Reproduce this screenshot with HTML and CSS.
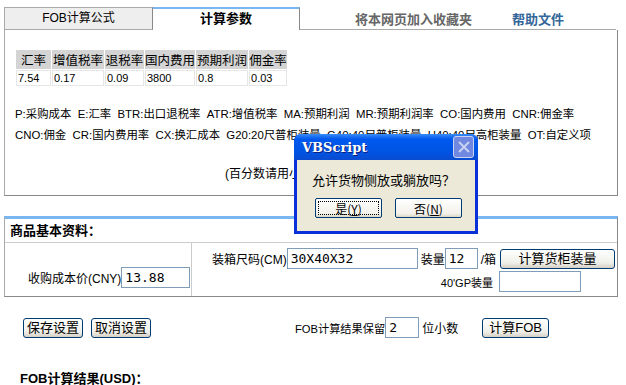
FILE: index.html
```html
<!DOCTYPE html>
<html lang="zh-CN">
<head>
    <meta charset="UTF-8">
    <title>FOB计算</title>
    <link rel="stylesheet" href="styles.css">
</head>
<body>
    <div class="tabs">
        <div class="tab">FOB计算公式</div>
        <div class="tab active">计算参数</div>
        <div class="tab-rest">
            <a class="fav">将本网页加入收藏夹</a>
            <a class="help">帮助文件</a>
        </div>
    </div>
    <div class="panel">
        <table class="params">
            <tr>
                <th class="c1">汇率</th><th class="c2">增值税率</th><th class="c3">退税率</th><th class="c4">国内费用</th><th class="c5">预期利润</th><th class="c6">佣金率</th>
            </tr>
            <tr>
                <td>7.54</td><td>0.17</td><td>0.09</td><td>3800</td><td>0.8</td><td>0.03</td>
            </tr>
        </table>
        <p class="legend first">P:采购成本&nbsp; E:汇率&nbsp; BTR:出口退税率&nbsp; ATR:增值税率&nbsp; MA:预期利润&nbsp; MR:预期利润率&nbsp; CO:国内费用&nbsp; CNR:佣金率</p>
        <p class="legend">CNO:佣金&nbsp; CR:国内费用率&nbsp; CX:换汇成本&nbsp; G20:20尺普柜装量&nbsp; G40:40尺普柜装量&nbsp; H40:40尺高柜装量&nbsp; OT:自定义项</p>
        <p class="note">(百分数请用小数表示)</p>
    </div>

    <div class="section">
        <div class="section-head">商品基本资料：</div>
        <div class="section-row">
            <div class="cell-left">
                <span>收购成本价(CNY)</span><input class="box w68" value="13.88">
            </div>
            <div class="cell-right">
                <div class="line">
                    <span>装箱尺码(CM)</span><input class="box w130" value="30X40X32">
                    <span class="ml3">装量</span><input class="box w32" value="12">
                    <span class="ml3">/箱</span>
                    <button class="btn calc">计算货柜装量</button>
                </div>
                <div class="line line2">
                    <span class="gp">40'GP装量</span><input class="box w81" value="">
                </div>
            </div>
        </div>
    </div>

    <div class="actions">
        <button class="btn">保存设置</button>
        <button class="btn">取消设置</button>
        <span class="keep">FOB计算结果保留</span><input class="box w33" value="2"><span class="ml3">位小数</span>
        <button class="btn fob">计算FOB</button>
    </div>

    <h3 class="result">FOB计算结果(USD)：</h3>

    <div class="dialog">
        <div class="dlg-title">
            <span>VBScript</span>
            <span class="dlg-close">
                <svg width="12" height="12" viewBox="0 0 12 12"><path d="M1 1 L11 11 M11 1 L1 11" stroke="#c9d2f2" stroke-width="2"/></svg>
            </span>
        </div>
        <div class="dlg-body">
            <p class="dlg-text">允许货物侧放或躺放吗？</p>
            <div class="dlg-btns">
                <button class="xpbtn focus">是(<u>Y</u>)</button>
                <button class="xpbtn">否(<u>N</u>)</button>
            </div>
        </div>
    </div>
</body>
</html>
```

FILE: styles.css
```css
body {
    margin: 0;
    font-family: "Liberation Sans", "Noto Sans CJK SC", sans-serif;
    font-size: 12px;
    color: #000;
    background: #fff;
    position: relative;
    width: 626px;
    height: 385px;
    overflow: hidden;
    white-space: nowrap;
}
.tabs {
    display: flex;
    margin: 7px 0 0 4px;
    height: 23px;
}
.tab {
    width: 147px;
    height: 21px;
    line-height: 21px;
    border: 1px solid #aaa;
    border-right-color: #888;
    background: #eee;
    text-align: center;
    font-size: 12px;
}
.tab.active {
    width: 146px;
    height: 21px;
    border: none;
    border-top: 2px solid #7ab6ef;
    border-right: 1px solid #888;
    background: #fff;
    font-weight: bold;
    font-size: 13px;
    line-height: 19px;
}
.tab-rest {
    width: 316px;
    border-bottom: 1px solid #aaa;
    display: flex;
    align-items: center;
    height: 22px;
    font-size: 13px;
    font-weight: bold;
}
.fav {
    margin-left: 55px;
    color: #666;
}
.help {
    margin-left: 40px;
    color: #336699;
}
.panel {
    margin-left: 4px;
    width: 612px;
    height: 146px;
    border-left: 1px solid #aaa;
    border-right: 1px solid #888;
    border-bottom: 1px solid #888;
    padding-top: 19px;
}
.params {
    border-collapse: separate;
    border-spacing: 1px;
    margin-left: 10px;
    background: #fff;
}
.params th {
    background: #d4d4d4;
    font-weight: normal;
    font-size: 12.5px;
    height: 17px;
    padding: 0;
    text-align: center;
}
.params td {
    border: 1px solid #e6e6e6;
    height: 14px;
    padding: 0 1px;
    font-size: 11px;
}
.c1 { width: 35px; }
.c2 { width: 52px; }
.c3 { width: 39px; }
.c4 { width: 50px; }
.c5 { width: 52px; }
.c6 { width: 38px; }
.legend {
    margin: 0 0 0 10px;
    line-height: 21px;
    font-size: 11.4px;
}
.legend.first {
    margin-top: 17px;
}
.note {
    margin: 18px 0 0 220px;
    line-height: 21px;
}
.section {
    margin: 20px 0 0 4px;
    width: 612px;
    border-top: 3px solid #7ab6ef;
    border-left: 1px solid #aaa;
    border-right: 1px solid #888;
    border-bottom: 1px solid #888;
}
.section-head {
    height: 23px;
    line-height: 23px;
    padding-left: 5px;
    font-weight: bold;
    font-size: 13px;
    border-bottom: 1px solid #ccc;
}
.section-row {
    display: flex;
    height: 53px;
}
.cell-left {
    width: 187px;
    border-right: 1px solid #ccc;
    display: flex;
    align-items: center;
    padding: 16px 0 0 23px;
    box-sizing: border-box;
}
.cell-right {
    flex: 1;
    padding: 5px 0 0 20px;
}
.line {
    display: flex;
    align-items: center;
    height: 21px;
}
.line2 {
    justify-content: flex-end;
    padding-right: 36px;
    margin-top: 2px;
}
.gp {
    font-size: 11px;
    margin-right: 6px;
}
.box {
    height: 21px;
    border: 1px solid #7f9db9;
    padding: 0 3px;
    font-family: "DejaVu Sans Mono", monospace;
    font-size: 13px;
    box-sizing: border-box;
    margin: 0;
}
.w68 { width: 69px; }
.w130 { width: 131px; }
.w32 { width: 33px; }
.w81 { width: 82px; }
.w33 { width: 34px; }
.ml3 { margin-left: 3px; }
.btn {
    height: 20px;
    border: 1px solid #003c74;
    border-radius: 3px;
    background: linear-gradient(#ffffff, #f0f0ea 70%, #d6d0c5);
    font-family: "Liberation Sans", "Noto Sans CJK SC", sans-serif;
    font-size: 13px;
    padding: 0;
    margin: 0;
    line-height: 16px;
    white-space: nowrap;
}
.calc {
    width: 115px;
    margin-left: 4px;
}
.actions {
    display: flex;
    align-items: center;
    margin: 20px 0 0 23px;
    height: 21px;
}
.actions .btn {
    width: 60px;
    margin-right: 8px;
}
.actions .keep {
    margin-left: 136px;
    font-size: 11.2px;
}
.actions .fob {
    width: 67px;
    margin-left: 24px;
}
.result {
    margin: 30px 0 0 20px;
    font-size: 13px;
}
.dialog {
    position: absolute;
    left: 294px;
    top: 134px;
    width: 184px;
    height: 100px;
    background: #0831d9;
    border-radius: 7px 7px 0 0;
    box-sizing: border-box;
    padding: 0 3px 3px 3px;
}
.dlg-title {
    height: 26px;
    margin: 0 -3px;
    border-radius: 7px 7px 0 0;
    background: linear-gradient(#3a8cf7, #0058ee 20%, #0054e3 70%, #0a4bd0);
    display: flex;
    align-items: center;
    padding: 0 4px 0 8px;
    color: #fff;
    font-weight: bold;
    font-family: "DejaVu Serif", serif;
    font-size: 13px;
    text-shadow: 1px 1px #0a1e7a;
}
.dlg-title span:first-child {
    flex: 1;
}
.dlg-close {
    width: 19px;
    height: 20px;
    border: 1px solid #c9d2f2;
    border-radius: 3px;
    background: #7088e0;
    display: flex;
    align-items: center;
    justify-content: center;
}
.dlg-body {
    background: #ece9d8;
    height: 71px;
    padding: 0 0 0 15px;
}
.dlg-text {
    margin: 0;
    padding-top: 10px;
    font-size: 13px;
    font-family: "Noto Sans CJK SC", sans-serif;
}
.dlg-btns {
    display: flex;
    margin-top: 9px;
}
.xpbtn {
    width: 67px;
    height: 20px;
    margin: 0 10px 0 3px;
    border: 1px solid #003c74;
    border-radius: 2px;
    background: linear-gradient(#ffffff, #f2f1ea 80%, #dcd8c8);
    font-size: 12px;
    padding: 0;
    font-family: "Noto Sans CJK SC", sans-serif;
}
.xpbtn.focus {
    outline: 1px dotted #000;
    outline-offset: -4px;
}
```
